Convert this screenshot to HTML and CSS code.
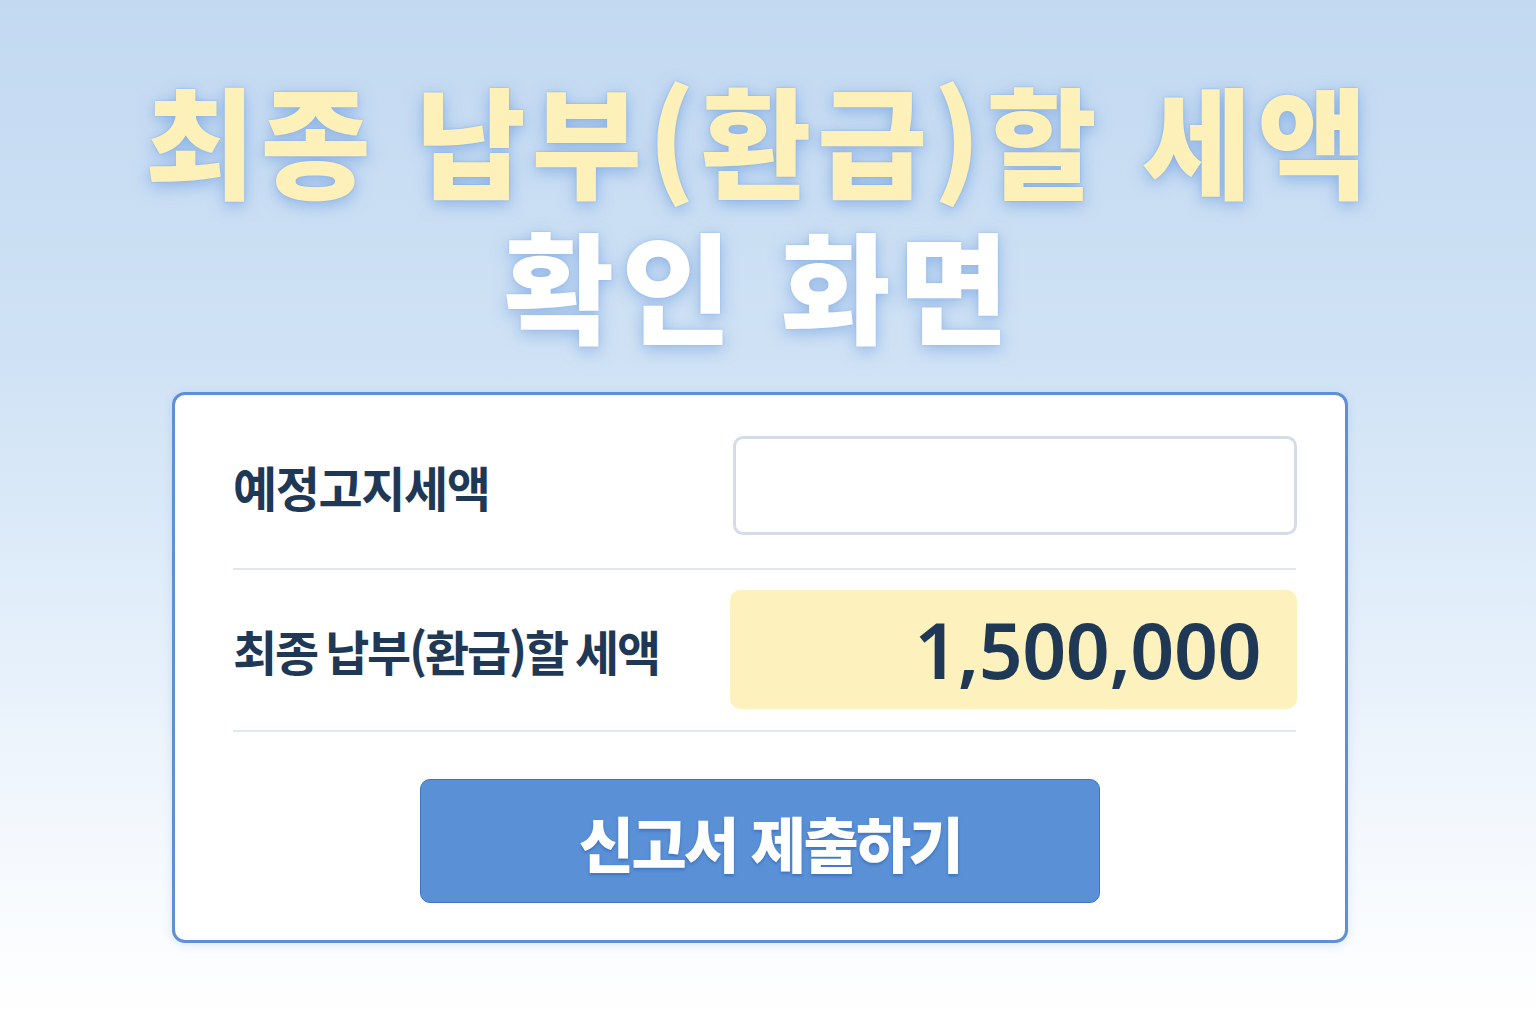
FILE: index.html
```html
<!DOCTYPE html>
<html lang="ko">
<head>
<meta charset="utf-8">
<title>최종 납부(환급)할 세액 확인 화면</title>
<link rel="stylesheet" href="styles.css">
</head>
<body>
<div class="page">
  <h1 class="title">
    <span class="title-line yellow">최종 납부(환급)할 세액</span>
    <span class="title-line white">확인 화면</span>
  </h1>
  <section class="card">
    <div class="row row-first">
      <div class="label">예정고지세액</div>
      <div class="input-box"></div>
    </div>
    <div class="row row-second">
      <div class="label label-spaced">최종 납부(환급)할 세액</div>
      <div class="value-box">1,500,000</div>
    </div>
    <div class="actions">
      <button class="submit" type="button">신고서 제출하기</button>
    </div>
  </section>
</div>
</body>
</html>
```
FILE: styles.css
```css
html, body {
  margin: 0;
  padding: 0;
}
body {
  width: 1536px;
  height: 1024px;
  overflow: hidden;
  background: linear-gradient(180deg, #c3d9f1 0%, #cfe2f5 35%, #e2eefa 60%, #f4f8fd 82%, #ffffff 100%);
  font-family: "Noto Sans CJK KR", "Noto Sans", sans-serif;
}
.page {
  width: 1176px;
  margin-left: 172px;
  display: flex;
  flex-direction: column;
  align-items: center;
}
.title {
  margin: 66px 0 0 0;
  display: flex;
  flex-direction: column;
  align-items: center;
  font-weight: 900;
  font-size: 120px;
  line-height: 145px;
  width: 1400px;
  text-align: center;
}
.title-line {
  display: block;
  white-space: nowrap;
}
.yellow {
  color: #fdf0b9;
  letter-spacing: 5.5px;
  margin-left: -2px;
  text-shadow: 0 0 2px #7ea9e4, 0 4px 16px rgba(86, 140, 218, 0.55);
}
.white {
  color: #ffffff;
  letter-spacing: 7.5px;
  margin-left: 0;
  text-shadow: 0 0 2px #8fb4e8, 0 4px 16px rgba(86, 140, 218, 0.5);
}
.card {
  box-sizing: border-box;
  width: 1176px;
  height: 551px;
  margin-top: 36px;
  background: #ffffff;
  border: 3px solid #5d90d7;
  border-radius: 13px;
  box-shadow: 0 2px 10px rgba(90, 140, 210, 0.18);
  padding: 0 49px 0 58px;
  display: flex;
  flex-direction: column;
}
.row {
  display: flex;
  align-items: center;
  justify-content: space-between;
  border-bottom: 2px solid #dfe7f1;
  box-sizing: border-box;
}
.row-first {
  height: 175px;
  padding-top: 8px;
}
.row-second {
  height: 162px;
}
.label {
  font-size: 48px;
  font-weight: 700;
  color: #1f3856;
  letter-spacing: -1.4px;
  white-space: nowrap;
}
.label-spaced {
  letter-spacing: -2.2px;
  word-spacing: -3px;
}
.input-box {
  box-sizing: border-box;
  width: 564px;
  height: 99px;
  margin-right: -1px;
  border: 3px solid #d6dbe8;
  border-radius: 10px;
  background: #ffffff;
}
.value-box {
  box-sizing: border-box;
  width: 567px;
  height: 119px;
  margin-top: -2px;
  margin-right: -1px;
  background: #fdf2be;
  border-radius: 10px;
  display: flex;
  align-items: center;
  justify-content: flex-end;
  padding-right: 36px;
  font-family: "Noto Sans", sans-serif;
  font-weight: 600;
  font-size: 77px;
  letter-spacing: -0.5px;
  color: #1f3856;
}
.actions {
  display: flex;
  justify-content: center;
  padding-top: 47px;
}
.submit {
  box-sizing: border-box;
  width: 680px;
  height: 124px;
  margin-left: -9px;
  background: #5990d6;
  border: 1px solid #3b76c6;
  border-radius: 10px;
  color: #ffffff;
  font-family: "Noto Sans CJK KR", sans-serif;
  font-weight: 900;
  font-size: 60px;
  letter-spacing: -2.6px;
  text-shadow: 0 2px 3px rgba(30, 80, 160, 0.45);
  padding: 0 0 0 20px;
  cursor: pointer;
}
```
